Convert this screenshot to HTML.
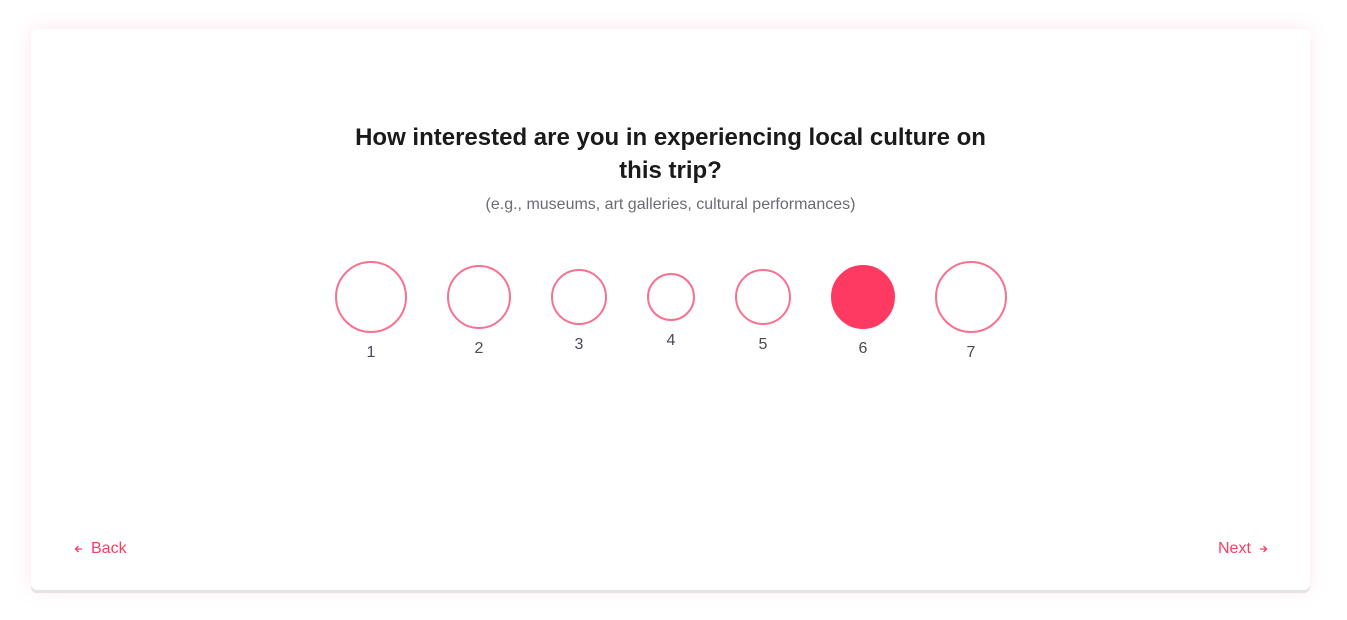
<!DOCTYPE html>
<html><head><style>
body{margin:0;width:1347px;height:620px;background:#fff;font-family:"Liberation Sans",sans-serif;position:relative;overflow:hidden}
.card{position:absolute;left:31px;top:29px;width:1279px;height:561px;background:#fff;border-radius:6px;box-shadow:0 3px 0 #e4e4e6,0 0 18px rgba(255,120,150,0.18)}
h1{position:absolute;left:0;width:1341px;top:121px;margin:0;text-align:center;font-size:24px;line-height:33px;font-weight:bold;color:#1a1a1a}
.sub{position:absolute;left:0;width:1341px;top:196px;text-align:center;font-size:16px;color:#6b6b73}
.c{position:absolute;border:2px solid #f87190;border-radius:50%;box-sizing:border-box}
.l{position:absolute;width:40px;text-align:center;font-size:16px;color:#4a4a55}
.nav{position:absolute;top:540px;font-size:16px;color:#ff3a64}
svg{position:absolute;top:545px}
</style></head><body>
<div class="card"></div>
<h1>How interested are you in experiencing local culture on<br>this trip?</h1>
<div class="sub">(e.g., museums, art galleries, cultural performances)</div>
<div class="c" style="left:335px;top:261px;width:72px;height:72px"></div><div class="l" style="left:351px;top:344px">1</div>
<div class="c" style="left:447px;top:265px;width:64px;height:64px"></div><div class="l" style="left:459px;top:340px">2</div>
<div class="c" style="left:551px;top:269px;width:56px;height:56px"></div><div class="l" style="left:559px;top:336px">3</div>
<div class="c" style="left:647px;top:273px;width:48px;height:48px"></div><div class="l" style="left:651px;top:332px">4</div>
<div class="c" style="left:735px;top:269px;width:56px;height:56px"></div><div class="l" style="left:743px;top:336px">5</div>
<div class="c" style="left:831px;top:265px;width:64px;height:64px;background:#ff3a62;border-color:#ff3a62"></div><div class="l" style="left:843px;top:340px">6</div>
<div class="c" style="left:935px;top:261px;width:72px;height:72px"></div><div class="l" style="left:951px;top:344px">7</div>
<svg style="left:74px" width="9" height="8" viewBox="0 0 9 8"><path d="M8 4H1.5M4.5 1L1.5 4L4.5 7" stroke="#ff3a64" stroke-width="1.3" fill="none"/></svg>
<div class="nav" style="left:91px">Back</div>
<div class="nav" style="left:1218px">Next</div>
<svg style="left:1259px" width="9" height="8" viewBox="0 0 9 8"><path d="M1 4H7.5M4.5 1L7.5 4L4.5 7" stroke="#ff3a64" stroke-width="1.3" fill="none"/></svg>
</body></html>
